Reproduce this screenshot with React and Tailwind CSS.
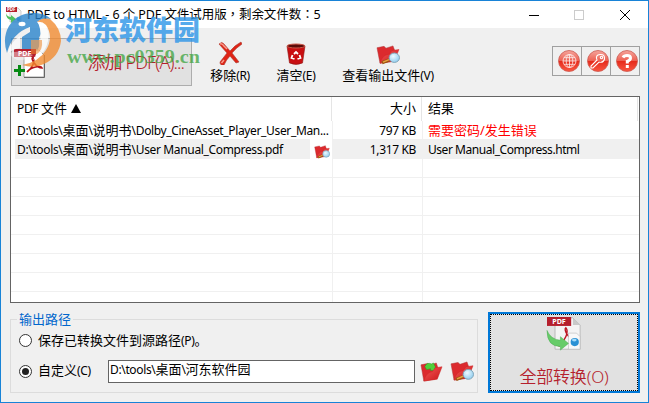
import React from "react";

const ui = "font-['Noto_Sans','Noto_Sans_CJK_SC',sans-serif]";

function Folder({ w, h, className = "", variant = "search" }) {
  return (
    <svg width={w} height={h} viewBox="0 0 24 22" preserveAspectRatio="none" className={className}>
      <defs>
        <linearGradient id="fold" x1="0" y1="0" x2="1" y2="1">
          <stop offset="0" stopColor="#f55a58" />
          <stop offset="1" stopColor="#c91418" />
        </linearGradient>
        <radialGradient id="lens" cx=".4" cy=".35" r=".7">
          <stop offset="0" stopColor="#eefaff" />
          <stop offset="1" stopColor="#8ccbee" />
        </radialGradient>
      </defs>
      <path d="M1 3 L8 1.5 L10 3.5 L17 1 L19 7 L16 18 L4 20 Z" fill="#dc2a2e" stroke="#a33" strokeWidth=".5" />
      {variant === "open" && (
        <path d="M5 5 Q7 0 12 2 L14 1 L16 5 L15 9 L11 9 L11 7 L7 8 Z" fill="#52cf3a" stroke="#269422" strokeWidth=".5" />
      )}
      <path d="M4 20 Q6 11 13 10 L16 6 L23 5 L18 18 Z" fill="url(#fold)" stroke="#c22" strokeWidth=".5" />
      {variant === "search" && (
        <g>
          <path d="M6 19.5 L13 16.500" stroke="#9a5412" strokeWidth="3.4" />
          <path d="M7 18.8 L13 16" stroke="#eaa040" strokeWidth="1.5" />
          <circle cx="18.3" cy="14" r="5.2" fill="url(#lens)" stroke="#80a5b8" strokeWidth="1" />
        </g>
      )}
    </svg>
  );
}

function TitleIcon() {
  return (
    <svg width="16" height="16" viewBox="0 0 16 16">
      <path d="M4 1h8l3 3v11H4z" fill="#f4f4f4" stroke="#bbb" strokeWidth=".7" />
      <path d="M0 0h11v5H0z" fill="#b51f2d" />
      <text x="1" y="4.3" fontSize="4.5" fontWeight="700" fill="#fff" className={ui}>PDF</text>
      <path d="M0 6q1 4 5 4V8l5 4-5 4v-3Q0 12 0 6z" fill="#4fbf5c" />
      <circle cx="12.5" cy="12" r="2" fill="#54a8dc" />
    </svg>
  );
}

function Acrobat() {
  return (
    <svg width="34" height="32" viewBox="0 0 34 32" className="absolute left-[12px] top-[46px]">
      <path d="M11 3h15l5 5v22H11z" fill="#fff" stroke="#8d8d8d" strokeWidth=".8" />
      <path d="M11 30.500h20.500V8" fill="none" stroke="#666" strokeWidth="1" />
      <path d="M14 25 C20 21 22 14 20 10.500 C17 11 23 21 29 21 C28 18 18 20 14 25" fill="none" stroke="#b3121b" strokeWidth="1.700" />
      <path d="M1 2h22v8H1z" fill="#b51f2d" />
      <text x="5" y="8.6" fontSize="7" fontWeight="700" fill="#fff" className={ui}>PDF</text>
      <path d="M5 18h3v4h4v3H8v4H5v-4H1v-3h4z" fill="#078a14" />
    </svg>
  );
}

function Watermark() {
  return (
    <svg width="205" height="70" viewBox="0 0 205 70" className="pointer-events-none absolute left-[-1px] top-[-1px]">
      <g opacity=".78">
        <path d="M7 53 Q2 38 9 26 Q18 12 36 13 Q46 14 51 19 Q43 18 37 22 L43 29 L39 38 L39 49 L22 49 L22 37 L30 32 L30 27 Q12 33 7 53Z" fill="#2682cb" />
        <ellipse cx="22" cy="24" rx="3.500" ry="2.200" fill="#fff" />
        <path d="M8 53 Q10 42 20 36 L20 48 Q13 49 8 53Z" fill="#fff" />
        <path d="M38 22 Q45 23 48 31 Q50 41 44 51 Q39 57 33 60 Q43 43 40 29Z" fill="#fff" />
        <path d="M50 19 Q61 28 61 41 Q59 57 44 64 Q34 69 22 65 Q39 62 46 50 Q54 37 46 25 Q42 21 37 22 Q42 17 50 19Z" fill="#f28a2e" />
        <path d="M31 40h11q1 10-5 14h-6z" fill="#f28a2e" opacity=".7" />
        <path d="M9 53 Q21 49 33 55 Q27 61 17 60 Q11 57 9 53z" fill="#fff" opacity=".55" />
      </g>
      <text x="65" y="39.5" fontSize="27" fontWeight="900" textLength="135" fill="#2f97e8" fillOpacity=".82" className="font-['Noto_Sans_CJK_SC',sans-serif]">河东软件园</text>
      <text x="67" y="63" fontSize="18" fontWeight="700" textLength="133" lengthAdjust="spacingAndGlyphs" fill="#45a747" fillOpacity=".8" className="font-['Liberation_Serif',serif]">www.pc0359.cn</text>
    </svg>
  );
}

function RoundIcon({ kind }) {
  return (
    <svg width="24" height="24" viewBox="0 0 24 24">
      <defs>
        <linearGradient id="ball" x1="0" y1="0" x2="0" y2="1">
          <stop offset="0" stopColor="#f5a59c" />
          <stop offset=".48" stopColor="#ee6254" />
          <stop offset=".52" stopColor="#e62c1c" />
          <stop offset="1" stopColor="#fa5641" />
        </linearGradient>
      </defs>
      <circle cx="12" cy="12" r="10.5" fill="url(#ball)" stroke="#cb5b52" strokeWidth=".8" />
      {kind === "globe" && (
        <g fill="none" stroke="#fff" strokeWidth=".8" opacity=".9">
          <circle cx="12.5" cy="12" r="6.5" />
          <ellipse cx="12.5" cy="12" rx="3.3" ry="6.5" />
          <path d="M12.5 5.5v13M6 12h13M7 8.7h11M7 15.3h11" />
        </g>
      )}
      {kind === "key" && (
        <g fill="none" stroke="#fff" strokeWidth="1.1">
          <path d="M11 11 Q9 6 14 5.5 Q19 5 18.5 10 Q17.500 14 13 13 L7 19 L5 19 L5 17 Z" />
          <circle cx="15.500" cy="8.500" r="1.200" />
        </g>
      )}
      {kind === "help" && (
        <g fill="none" stroke="#fff" strokeWidth="3">
          <path d="M8 8.500 Q9 6.500 12 6.500 Q15.500 6.500 15.500 9 Q15.500 11 12.300 12.300 V14.500" />
          <path d="M12.300 16v3" />
        </g>
      )}
    </svg>
  );
}

function ConvertIcon() {
  return (
    <svg width="38" height="38" viewBox="0 0 38 38">
      <path d="M9 1h20l8 8v27H9z" fill="#f4f4f4" stroke="#aaa" strokeWidth=".8" />
      <path d="M29 1v8h8z" fill="#c9c9c9" />
      <path d="M13 33 C20 27 25 16 21 12 C18 14 25 27 33 25" fill="none" stroke="#bd1723" strokeWidth="1.600" />
      <path d="M24 18h9l4 4v14H24z" fill="#f8f8f8" stroke="#bbb" strokeWidth=".7" />
      <path d="M0 0h27v10H0z" fill="#b51f2d" />
      <text x="6" y="8" fontSize="8" fontWeight="700" textLength="15" fill="#fff" className={ui}>PDF</text>
      <path d="M0 15 Q4 25 15 26 V22 L24 29.500 L15 37 V33 Q0 33 0 15z" fill="#67cc69" stroke="#42a64b" strokeWidth=".5" />
      <circle cx="31" cy="28" r="4.600" fill="#2a91d4" />
      <ellipse cx="30.500" cy="25.800" rx="2.600" ry="1.600" fill="#a4dbfa" />
    </svg>
  );
}

function Tool({ icon, label, className }) {
  return (
    <div className={`flex flex-col items-center ${className}`}>
      <div className="flex h-[24px] items-end justify-center">{icon}</div>
      <div className="mt-px h-[18px] whitespace-nowrap text-[13px] leading-[18px]">{label}</div>
    </div>
  );
}

function Latin({ children }) {
  return <span className="text-[12px] tracking-[-0.35px]">{children}</span>;
}

function Mark({ children }) {
  return <span className="font-['Noto_Sans_CJK_TC',sans-serif]">{children}</span>;
}

function Radio({ checked }) {
  return (
    <span className="flex size-[13px] shrink-0 items-center justify-center rounded-full border border-[#333] bg-white">
      {checked && <span className="size-[7px] rounded-full bg-[#222]" />}
    </span>
  );
}

const columns = "grid grid-cols-[321px_90px_1fr]";

export default function App() {
  return (
    <div className={`relative flex h-[403px] w-[649px] flex-col overflow-hidden border border-[#1883d7] bg-[#f0f0f0] text-black ${ui}`}>
      <header className="flex h-[27px] shrink-0 items-center bg-white pl-[5px]">
        <TitleIcon />
        <div lang="zh-TW" className="ml-[5px] whitespace-nowrap text-[12.5px] leading-[26px] tracking-[-0.07px]">
          PDF to HTML - 6 个 PDF 文件试用版<Mark>，</Mark>剩余文件数<Mark>：</Mark>5
        </div>
        <svg width="102" height="12" viewBox="0 0 102 12" className="ml-auto mr-[17px]" shapeRendering="crispEdges">
          <path d="M0 6.500h10" stroke="#000" />
          <path d="M45.500 1.500h9v9h-9z" fill="none" stroke="#ccc" />
          <path d="M91 1l10 10M101 1l-10 10" stroke="#000" shapeRendering="auto" />
        </svg>
      </header>

      <div className="flex h-[68px] shrink-0 items-start">
        <button className="ml-[10px] mt-[10px] flex h-[48px] w-[181px] items-center justify-end border border-[#adadad] bg-[#e1e1e1] pr-[7px] text-[18px] font-[350] tracking-[-0.9px] text-[#b51f2d]">
          <span className="whitespace-nowrap">添加 PDF(A)...</span>
        </button>
        <Tool
          className="ml-[16px] mt-[13px] w-[44px]"
          label={<>移除<Latin>(R)</Latin></>}
          icon={
            <svg width="24" height="24" viewBox="0 0 24 24">
              <path d="M1 3 Q4 0 6 3 L12 10 Q17 4 23 1 L24 3 Q18 7 14 12 L21 21 L18 22 L12 15 Q8 19 6 24 Q2 25 2 21 L9 12z" fill="#df2416" stroke="#a83b31" strokeWidth=".6" />
              <path d="M2 3 Q4 2 6 5 L9 8M3.500 22 L6 19" fill="none" stroke="#f79c8e" strokeWidth="1.500" />
            </svg>
          }
        />
        <Tool
          className="ml-[22px] mt-[13px] w-[44px]"
          label={<>清空<Latin>(E)</Latin></>}
          icon={
            <svg width="20" height="22" viewBox="0 0 20 22">
              <path d="M1 3h18l-2.500 17q-6.500 3-13 0z" fill="#c90f12" stroke="#8c1714" strokeWidth=".6" />
              <ellipse cx="10" cy="3" rx="9" ry="2" fill="#5c0b09" stroke="#ce5a4b" />
              <path d="M8 11l2-2 2 2M13.500 12l1 3-3 1M8.500 16l-3-1 1-3" fill="none" stroke="#fff" strokeWidth="1.800" />
            </svg>
          }
        />
        <Tool
          className="ml-[20px] mt-[13px] w-[100px]"
          label={<>查看输出文件<Latin>(V)</Latin></>}
          icon={<Folder w={24} h={20} />}
        />
        <div className="ml-auto mr-[8px] mt-[18px] flex h-[30px] w-[88px] border border-[#a0a0a0]">
          {["globe", "key", "help"].map((kind) => (
            <div key={kind} className="flex w-[29px] items-center justify-center border-r border-[#a0a0a0] pl-[4px] last:border-r-0">
              <RoundIcon kind={kind} />
            </div>
          ))}
        </div>
      </div>

      <main className="ml-[9px] flex h-[207px] w-[630px] shrink-0 flex-col border border-[#646464] bg-white text-[13px]">
        <div className={`${columns} h-[24px] shrink-0 leading-[23px]`}>
          <div className="flex border-r border-[#e5e5e5] pl-[6px]">
            <span className="whitespace-pre"><Latin>PDF </Latin>文件</span>
            <svg width="10" height="9" viewBox="0 0 10 9" className="ml-[4px] mt-[7px]"><path d="M5 0L10 9H0z" /></svg>
          </div>
          <div className="border-r border-[#e5e5e5] pr-[5px] text-right">大小</div>
          <div className="mr-px border-r border-[#e5e5e5] pl-[6px]">结果</div>
        </div>
        <div className="grid flex-1 grid-cols-[322px_90px_1fr] grid-rows-[18px_20px_repeat(7,19px)_10px] leading-[18px]">
          <div className="whitespace-nowrap border-r border-[#f0f0f0] pl-[6px]"><Latin>D:\tools\</Latin>桌面<Latin>\</Latin>说明书<Latin>\Dolby_CineAsset_Player_User_Man...</Latin></div>
          <div className="border-r border-[#f0f0f0] pr-[6px] text-right"><Latin>797 KB</Latin></div>
          <div className="pl-[5px] text-[#ff0000]">需要密码/发生错误</div>
          <div className="flex border-r border-[#f0f0f0]">
            <div className="ml-[4px] w-[295px] whitespace-nowrap bg-[#f0f0f0] pl-[2px] leading-[20px]"><Latin>D:\tools\</Latin>桌面<Latin>\</Latin>说明书<Latin>\User Manual_Compress.pdf</Latin></div>
            <Folder w={16} h={14} className="ml-[4px] mt-[6px]" />
          </div>
          <div className="border-r border-[#f0f0f0] bg-[#f0f0f0] pr-[6px] text-right leading-[20px]"><Latin>1,317 KB</Latin></div>
          <div className="bg-[#f0f0f0] pl-[5px] leading-[20px]"><span className="text-[12px] tracking-[-0.45px]">User Manual_Compress.html</span></div>
          {Array.from({ length: 7 }, (_, i) => (
            <React.Fragment key={i}>
              <div className="border-b border-r border-[#f0f0f0]" />
              <div className="border-b border-r border-[#f0f0f0]" />
              <div className="border-b border-[#f0f0f0]" />
            </React.Fragment>
          ))}
          <div className="border-r border-[#f0f0f0]" />
          <div className="border-r border-[#f0f0f0]" />
          <div />
        </div>
      </main>

      <div className="ml-[9px] flex items-start">
        <fieldset className="mt-[7px] h-[83px] w-[468px] border border-[#dcdcdc] pl-[8px]">
          <legend className="-ml-[2px] h-[18px] px-[2px] text-[13px] leading-[18px] text-[#0066cc]">输出路径</legend>
          <div className="-mt-px flex h-[26px] items-center gap-[6px] text-[13px]">
            <Radio />
            <span className="leading-[20px]">保存已转换文件到源路径<Latin>(P)</Latin>。</span>
          </div>
          <div className="mt-[3px] flex h-[30px] items-center text-[13px]">
            <Radio checked />
            <span className="ml-[6px] w-[70px]">自定义<Latin>(C)</Latin></span>
            <div className="h-[23px] w-[307px] border border-[#646464] bg-white pl-[1px] leading-[17px]"><Latin>D:\tools\</Latin>桌面<Latin>\</Latin>河东软件园</div>
            <Folder w={23} h={21} variant="open" className="ml-[5px] mt-[3px]" />
            <Folder w={24} h={21} className="ml-[7px]" />
          </div>
        </fieldset>
        <button className="ml-[10px] mt-[9px] h-[81px] w-[152px] border-2 border-[#0078d7] bg-[#e1e1e1]">
          <span className="flex h-full flex-col items-center border border-dotted border-black pt-[2px] text-[#b51f2d]">
            <ConvertIcon />
            <span className="mt-[13px] whitespace-nowrap text-[17px] font-[350] leading-[26px] tracking-[-0.2px]">全部转换(O)</span>
          </span>
        </button>
      </div>

      <Acrobat />
      <Watermark />
    </div>
  );
}
